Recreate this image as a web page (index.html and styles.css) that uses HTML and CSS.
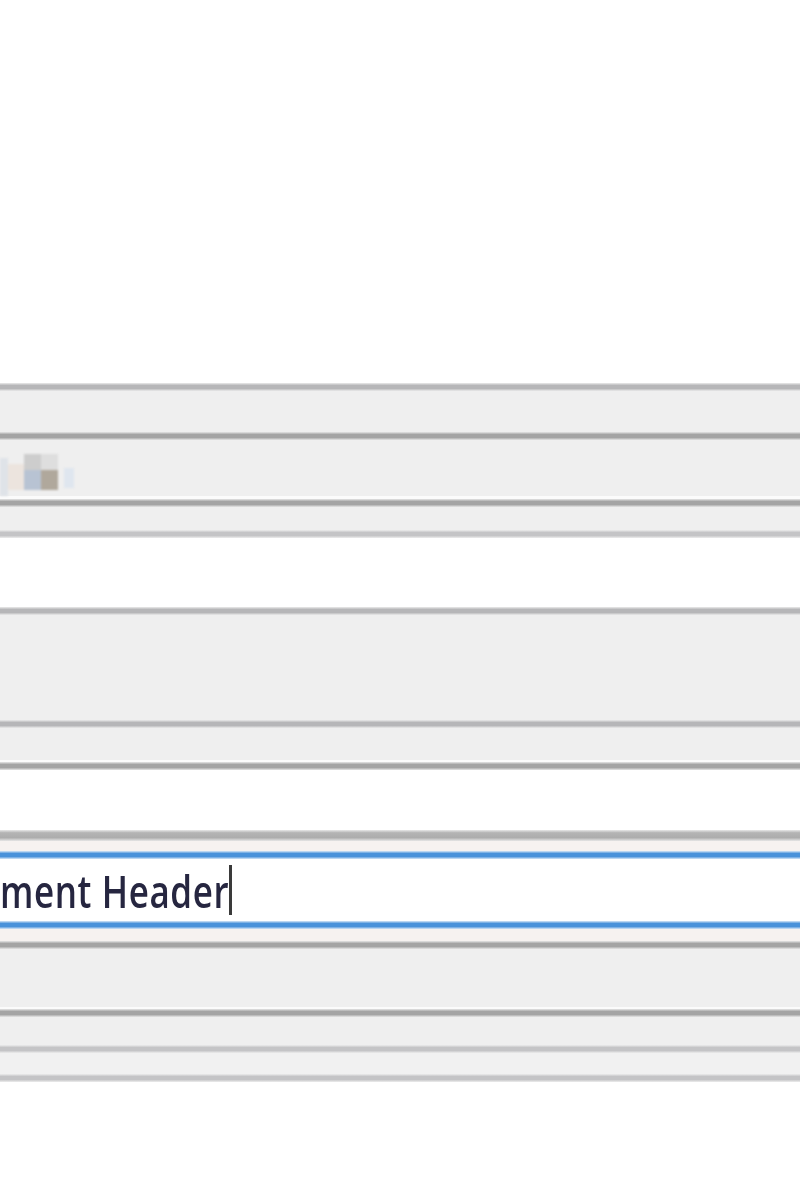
FILE: index.html
```html
<!DOCTYPE html>
<html lang="en">
<head>
<meta charset="utf-8">
<title>Header editor</title>
<link rel="stylesheet" href="styles.css">
</head>
<body>
<div class="page">
  <div class="space space-top"></div>
  <div class="rule rule-mid"></div>
  <div class="band band-1"></div>
  <div class="rule rule-dark"></div>
  <div class="band band-2">
    <div class="icon">
      <span class="blk b1"></span>
      <span class="blk b2"></span>
      <span class="blk b3"><i class="top t-gray"></i><i class="bot bt-blue"></i></span>
      <span class="blk b4"><i class="top t-light"></i><i class="bot bt-brown"></i></span>
      <span class="blk b5"></span>
    </div>
  </div>
  <div class="hl"></div>
  <div class="rule rule-dark"></div>
  <div class="band band-3"></div>
  <div class="rule rule-light"></div>
  <div class="space space-2"></div>
  <div class="rule rule-mid"></div>
  <div class="band band-4"></div>
  <div class="rule rule-mid"></div>
  <div class="band band-5"></div>
  <div class="hl hl-thin"></div>
  <div class="rule rule-dark"></div>
  <div class="space space-3"></div>
  <div class="rule rule-thick"></div>
  <div class="warm"></div>
  <div class="blue"></div>
  <div class="input">
    <span class="input-text">ment Header</span><span class="caret"></span>
  </div>
  <div class="blue"></div>
  <div class="warm warm-2"></div>
  <div class="rule rule-dark"></div>
  <div class="band band-6"></div>
  <div class="hl hl-thin"></div>
  <div class="rule rule-dark"></div>
  <div class="band band-7"></div>
  <div class="rule rule-light"></div>
  <div class="band band-8"></div>
  <div class="rule rule-light"></div>
</div>
</body>
</html>
```
FILE: styles.css
```css
html, body {
  margin: 0;
  padding: 0;
  background: #ffffff;
}

.page {
  width: 800px;
  display: flex;
  flex-direction: column;
  font-family: "Open Sans", "Noto Sans", sans-serif;
}

.space { background: #ffffff; }
.space-top { height: 383px; }
.space-2 { height: 69px; }
.space-3 { height: 60px; }

.band { background: #efefef; }
.band-1 { height: 41px; }
.band-2 { height: 56px; display: flex; align-items: flex-start; }
.band-3 { height: 23px; }
.band-4 { height: 105px; }
.band-5 { height: 32px; }
.band-6 { height: 58px; }
.band-7 { height: 28px; }
.band-8 { height: 21px; background: #f1f1f1; }

.hl { height: 3px; background: #fbfbfb; }
.hl-thin { height: 2px; }

.rule { height: 8px; }
.rule-light {
  background: linear-gradient(to bottom, #ededed 0%, #c4c4c6 30%, #c4c4c6 70%, #ededed 100%);
}
.rule-mid {
  background: linear-gradient(to bottom, #ebebeb 0%, #b6b6b8 30%, #b6b6b8 70%, #ebebeb 100%);
}
.rule-dark {
  background: linear-gradient(to bottom, #e6e6e6 0%, #a4a4a4 30%, #a4a4a4 70%, #e6e6e6 100%);
}
.rule-thick {
  height: 11px;
  background: linear-gradient(to bottom, #e8e8e8 0%, #b4b4b4 25%, #adadad 70%, #e6e6e6 100%);
}

.warm { height: 10px; background: #f6f2f0; }
.warm-2 { height: 12px; }

.blue {
  height: 8px;
  background: linear-gradient(to bottom, #d9e8f7 0%, #4a92da 30%, #4a92da 70%, #d9e8f7 100%);
}

.input {
  height: 62px;
  background: #ffffff;
  display: flex;
  align-items: center;
  overflow: hidden;
}

.input-text {
  display: inline-block;
  margin-left: 0;
  font-size: 35px;
  font-weight: 600;
  line-height: 1;
  color: #262640;
  letter-spacing: 0.6px;
  transform: scaleY(1.3);
  transform-origin: left center;
  filter: blur(0.6px);
}

.caret {
  display: inline-block;
  width: 3px;
  height: 50px;
  margin-left: 0;
  background: #3a3a3a;
  filter: blur(0.4px);
}

.icon {
  display: flex;
  align-items: flex-end;
  height: 50px;
  margin-top: 6px;
  filter: blur(1.2px);
}

.blk { display: flex; flex-direction: column; }
.b1 { width: 8px; height: 38px; background: #dfe3e8; }
.b2 { width: 16px; height: 26px; background: #ece4de; margin-bottom: 6px; }
.b3, .b4 { width: 17px; height: 36px; margin-bottom: 6px; }
.top { height: 16px; }
.bot { flex: 1; }
.t-gray { background: #cdcdcd; }
.bt-blue { background: #b8c3d3; }
.t-light { background: #dedede; }
.bt-brown { background: #b0a89c; }
.b5 { width: 10px; height: 20px; background: #dfe6ef; margin-left: 6px; margin-bottom: 8px; }
```
